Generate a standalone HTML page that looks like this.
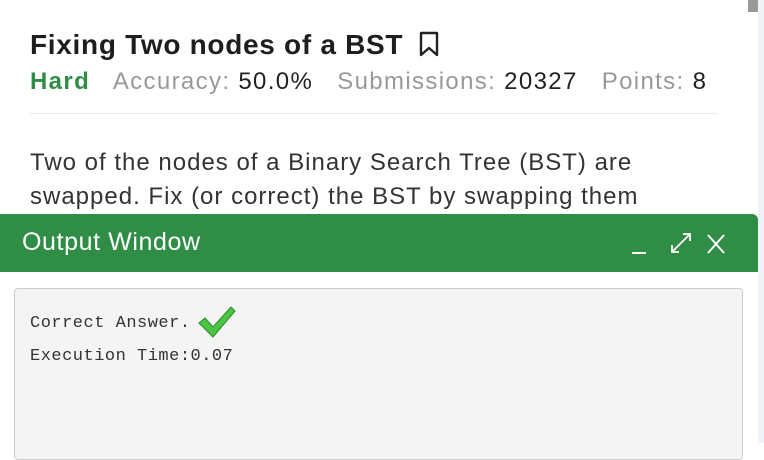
<!DOCTYPE html>
<html><head><style>
body{margin:0;width:764px;height:443px;overflow:hidden;background:#fff;position:relative;font-family:"Liberation Sans",sans-serif}
.t{position:absolute;left:30px;top:29px;font-size:28px;font-weight:bold;color:#1e1e1e;letter-spacing:0.7px;white-space:nowrap}
.m{position:absolute;left:30px;top:68px;font-size:24px;color:#999;letter-spacing:1.35px;white-space:nowrap}
.m b{color:#2f8d46}.m span{color:#222}
.hr{position:absolute;left:30px;top:113px;width:688px;height:1px;background:#e8e8e8}
.p{position:absolute;left:30px;top:146px;font-size:24px;line-height:34px;color:#333;letter-spacing:1px;width:720px;white-space:nowrap}
.g{position:absolute;left:0;top:214px;width:758px;height:58px;background:#308d46;border-radius:0 6px 0 0}
.g .h{position:absolute;left:22px;top:14px;color:#fff;font-size:25px;letter-spacing:0.6px}
.w{position:absolute;left:0;top:272px;width:758px;height:171px;background:#fff}
.o{position:absolute;left:14px;top:288px;width:727px;height:170px;background:#f4f4f4;border:1px solid #ccc;border-radius:4px}
.o div{position:absolute;left:15px;font-family:"Liberation Mono",monospace;font-size:17px;letter-spacing:0.5px;color:#333}
.sb{position:absolute;left:758px;top:0;width:6px;height:443px;background:#f0f2f8}
.th{position:absolute;left:748px;top:0;width:10px;height:12px;background:#999}
</style></head><body>
<div class="t">Fixing Two nodes of a BST <svg width="22" height="26" viewBox="0 0 22 26" style="vertical-align:-3px;margin-left:6px"><path d="M3 2H19V24L11 17L3 24Z" fill="none" stroke="#222" stroke-width="2.4" stroke-linejoin="round"/></svg></div>
<div class="m"><b>Hard</b>&nbsp;&nbsp; Accuracy: <span>50.0%</span>&nbsp;&nbsp; Submissions: <span>20327</span>&nbsp;&nbsp; Points: <span>8</span></div>
<div class="hr"></div>
<div class="p">Two of the nodes of a Binary Search Tree (BST) are<br>swapped. Fix (or correct) the BST by swapping them</div>
<div class="w"></div>
<div class="g"><div class="h">Output Window</div>
<svg style="position:absolute;left:628px;top:16px" width="110" height="30" viewBox="0 0 110 30"><path d="M4 23H18" stroke="#fff" stroke-width="2"/><path d="M44 22L62 4M55 4H62V11M44 15V22H51" fill="none" stroke="#fff" stroke-width="1.8"/><path d="M80 5L96 23M96 5L80 23" stroke="#fff" stroke-width="2"/></svg></div>
<div class="o"><div style="top:16px">Correct Answer. <svg width="40" height="34" viewBox="0 0 40 34" style="vertical-align:-12px;margin-left:-4px"><path d="M2 18L8 13L16 22L34 2L38 6L16 32Z" fill="#4cc545" stroke="#2a8a2a" stroke-width="1"/></svg></div><div style="top:58px">Execution Time:0.07</div></div>
<div class="sb"></div><div class="th"></div>
</body></html>
